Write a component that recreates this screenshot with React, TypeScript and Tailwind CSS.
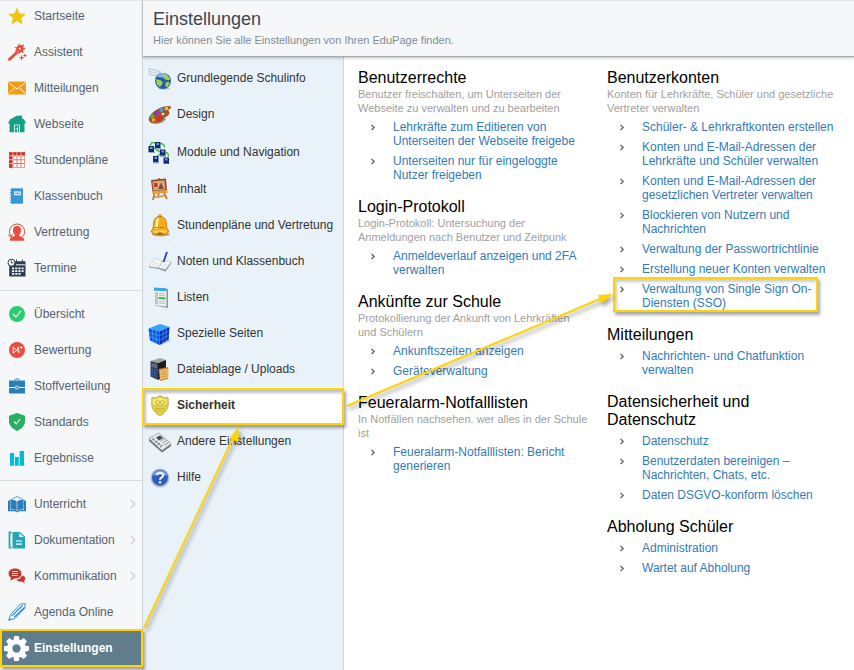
import type { ReactNode } from 'react'
import clsx from 'clsx'

type NavItem = { label: string; icon: ReactNode; more?: boolean }
type MenuItem = { label: string; icon: ReactNode; active?: boolean; tall?: boolean }
type LinkItem = { label: string; marked?: boolean }
type Section = { title: string; text?: string; links: LinkItem[] }

function Glyph({ children }: { children: ReactNode }) {
  return <svg className="size-5 shrink-0" viewBox="0 0 20 20" fill="none" aria-hidden="true">{children}</svg>
}

function Art({ children }: { children: ReactNode }) {
  return <svg className="size-6 shrink-0" viewBox="0 0 24 24" fill="none" aria-hidden="true">{children}</svg>
}

const navGroups: NavItem[][] = [
  [
    { label: 'Startseite', icon: <Glyph><path fill="#f1c40f" d="M10 1.4l2.6 6 6.4.5-4.9 4.2 1.6 6.3-5.7-3.3-5.7 3.3 1.6-6.3L1 7.9l6.4-.5z" /></Glyph> },
    {
      label: 'Assistent',
      icon: (
        <Glyph>
          <path stroke="#e74c3c" strokeWidth="2.8" strokeLinecap="round" d="M2.4 17.4l7.2-6.6" />
          <path fill="#e74c3c" d="M12.6 1l1.3 2.6L17 2.2l-.8 3.2 2.6 1.4-2.7 1.3.6 3-2.9-1.1-2 2.4-.9-2.9-3.2.2 1.9-2.6L7.4 5l3 .1L10.8 2l1.4 1.8z" />
          <circle cx="12.7" cy="6.8" r="1" fill="#f5f7f9" />
          <path stroke="#e74c3c" strokeWidth="1.1" d="M14.6 13.5v4.6M12.3 15.8h4.6M18 12v3M16.5 13.5h3" />
        </Glyph>
      ),
    },
    {
      label: 'Mitteilungen',
      icon: (
        <Glyph>
          <path fill="#f39c12" d="M1 3.5h18v13H1z" />
          <path stroke="#fff" strokeWidth="1" d="M1.5 4.5L10 11l8.5-6.5M1.5 15.5l6-5.5M18.5 15.5l-6-5.5" />
        </Glyph>
      ),
    },
    {
      label: 'Webseite',
      icon: (
        <Glyph>
          <path fill="#16a085" d="M2.5 18.2V9.5L1 9.2 3 5.5 10 1.6l1.5.9V1.6H15v2.6l2.2 1.3L19 9.2l-1.5.3v8.7z" />
          <path stroke="#d5eeea" strokeWidth="1" d="M7.5 18v-7h5v7M10.5 13v5" />
          <circle cx="9.2" cy="14.6" r=".6" fill="#fff" />
        </Glyph>
      ),
    },
    {
      label: 'Stundenpläne',
      icon: (
        <Glyph>
          <path fill="#e2776b" d="M2 2.3h16v15.4H2z" />
          <path fill="#c0392b" d="M2 2.3h16v3.4H2zM2 2.3h4v15.4H2z" />
          <path stroke="#fff" strokeWidth=".6" d="M5.9 2.3v15.4M9.9 2.3v3.4M13.9 2.3v3.4M2 5.8h16M2 9.7h4M2 13.600h4" />
          <path fill="#fff" d="M6.6 6.500h2.900v2.800H6.600zM10.500 6.500h2.900v2.800h-2.900zM14.400 6.500h2.900v2.800h-2.900zM6.600 10.300h2.900v2.800H6.600zM10.500 10.300h2.900v2.800h-2.900zM14.400 10.300h2.900v2.800h-2.900zM6.600 14.100h2.900v2.800H6.600zM10.500 14.100h2.900v2.800h-2.900zM14.400 14.100h2.900v2.800h-2.900z" />
        </Glyph>
      ),
    },
    {
      label: 'Klassenbuch',
      icon: (
        <Glyph>
          <path fill="#3498db" d="M4 2.3h12v15.4H4z" />
          <path stroke="#3498db" strokeWidth="1" strokeDasharray="1 1.5" d="M3.3 3.5v13.5" />
          <path fill="#d8ecf9" d="M7 5.3h7v4H7z" />
          <path stroke="#3498db" strokeWidth=".9" d="M8 7.3h5" />
        </Glyph>
      ),
    },
    {
      label: 'Vertretung',
      icon: (
        <Glyph>
          <path stroke="#e74c3c" strokeWidth="1" d="M4.5 14.8A7.6 7.6 0 1 1 15.5 14.8M1.2 13.3l3.3 1.8.9-3.2" />
          <path fill="#e74c3c" d="M10 4c2.6 0 4 1.6 4 4.200 0 2-.8 3.600-1.900 4.600v1.300c2.800.8 5.200 1.700 5.200 4.700H2.700c0-3 2.400-3.900 5.200-4.700v-1.300C6.800 11.800 6 10.200 6 8.200 6 5.600 7.400 4 10 4z" />
        </Glyph>
      ),
    },
    {
      label: 'Termine',
      icon: (
        <Glyph>
          <path fill="#2c3e50" d="M3 3.2h15.500v15.200H2.200V8z" />
          <path fill="#f5f7f9" d="M9 6.300h9v1H9z" />
          <circle cx="4.500" cy="4.700" r="3.500" fill="#f5f7f9" stroke="#2c3e50" strokeWidth="1" />
          <path stroke="#2c3e50" strokeWidth=".9" d="M4.500 2.500v2.400h1.800M9.500 1.500v3M15.500 1.500v3" />
          <path fill="#f5f7f9" d="M5 9.500h2.200v1.800H5zM8.200 9.500h2.200v1.800H8.200zM11.400 9.500h2.200v1.800h-2.200zM14.600 9.500h2v1.800h-2zM5 12.200h2.200V14H5zM8.200 12.200h2.200V14H8.200zM11.400 12.200h2.200V14h-2.200zM14.600 12.200h2V14h-2zM5 14.900h2.200v1.800H5zM8.200 14.900h2.200v1.800H8.200zM11.400 14.900h2.200v1.800h-2.200z" />
        </Glyph>
      ),
    },
  ],
  [
    { label: 'Übersicht', icon: <Glyph><circle cx="10" cy="10" r="8" fill="#2ecc71" /><path stroke="#eafaf0" strokeWidth="1.2" d="M6 10l3 3 5-6.3" /></Glyph> },
    {
      label: 'Bewertung',
      icon: <Glyph><circle cx="10" cy="10" r="8" fill="#e74c3c" /><path stroke="#fff" strokeWidth=".9" d="M6.2 13.500V7l5.300 5M6 12.800c3-1 4.200-2.700 5.200-6l1 6M12.800 7.500h3M14.300 6v3" /></Glyph>,
    },
    {
      label: 'Stoffverteilung',
      icon: (
        <Glyph>
          <path fill="#2980b9" d="M2 4.500h16v13H2z" />
          <path stroke="#2980b9" strokeWidth="1" d="M7.500 4.500l1-1.500h3l1 1.500" />
          <path stroke="#eaf3f9" strokeWidth="1" d="M2 11.500h6M12 11.500h6" />
          <ellipse cx="10" cy="11.500" rx="1.900" ry="1.400" stroke="#fff" strokeWidth=".8" />
        </Glyph>
      ),
    },
    {
      label: 'Standards',
      icon: <Glyph><path fill="#27ae60" d="M10 1l8 2.800v5c0 4.700-3 8-8 10.200C5 16.800 2 13.500 2 8.800v-5z" /><path stroke="#eafaf0" strokeWidth="1.100" d="M7 9.500l2.400 2.400L13.200 7" /></Glyph>,
    },
    { label: 'Ergebnisse', icon: <Glyph><path fill="#00bcd4" d="M3 5h4.200v12.800H3zM8 9h3.800v8.800H8zM12.600 3h4.400v14.800h-4.400z" /></Glyph> },
  ],
  [
    {
      label: 'Unterricht',
      more: true,
      icon: (
        <Glyph>
          <path stroke="#5b9bc8" strokeWidth="1" d="M1.500 7L10 2.500 18.500 7" />
          <path fill="#2980b9" d="M1 7h2v9.300H1zM17 7h2v9.300h-2zM3.400 6C6 5.700 8.400 6 9.700 7.200v9.200c-1.700-1-4-1.200-6.300-.8zM16.600 6c-2.600-.3-5 0-6.300 1.200v9.200c1.700-1 4-1.200 6.300-.8z" />
          <path stroke="#2980b9" strokeWidth="1.200" d="M1 16.600h7l2 1.200 2-1.200h7" />
        </Glyph>
      ),
    },
    {
      label: 'Dokumentation',
      more: true,
      icon: (
        <Glyph>
          <path fill="#26a5b5" d="M5.500 2H13l5 4.500v12H5.500z" />
          <path stroke="#26a5b5" strokeWidth="1.800" d="M4.500 2.500H2.500v15.200h2" />
          <path fill="#e4f5f7" d="M12.300 3v4h4.600z" />
          <path stroke="#fff" strokeWidth="1.200" d="M9 11h6M9 14.200h6" />
        </Glyph>
      ),
    },
    {
      label: 'Kommunikation',
      more: true,
      icon: (
        <Glyph>
          <path fill="#c0392b" d="M8 2.400c4 0 6.500 2.200 6.500 5.100S12 12.600 8 12.600l-1 .1-3.800 2 .8-3C2.300 10.800 1.600 9.300 1.600 7.500c0-2.900 2.400-5.100 6.400-5.100z" />
          <path stroke="#f5d8d5" strokeWidth="1" d="M5 5.500h6M5 7.500h6M5 9.500h6" />
          <path fill="#c0392b" stroke="#f5f7f9" strokeWidth=".6" d="M14.500 9.300c2.500.2 4.100 1.500 4.100 3.300 0 1-.5 1.800-1.300 2.400l1 2.800-3.300-1.800c-3.200.2-5.300-.7-6-2.500 3-.2 5-1.800 5.500-4.200z" />
        </Glyph>
      ),
    },
    {
      label: 'Agenda Online',
      icon: (
        <Glyph>
          <path fill="#fff" stroke="#3b8ed8" strokeWidth="1" d="M1.800 18.200l2-6L13.500 2l4.800-.2-.6 4.500L8 16.500z" />
          <path stroke="#3b8ed8" strokeWidth="1.400" d="M5 13.800L15.500 3.500M7.200 15.300L17.500 5.500" />
          <path fill="#3b8ed8" d="M1.400 18.600l1-3.200 2.200 2z" />
        </Glyph>
      ),
    },
  ],
]

const menu: MenuItem[] = [
  {
    label: 'Grundlegende Schulinfo',
    icon: (
      <Art>
        <path fill="#c9d4da" d="M0 1.500l13 3.500v7L1 9z" />
        <path stroke="#f4f8fa" strokeWidth="1" d="M1.500 4l9 2.500M2 6.500l7 2" />
        <ellipse cx="16" cy="22.500" rx="6" ry="1.200" fill="#b4c0c8" />
        <circle cx="15" cy="15" r="8" fill="#2a56b0" />
        <path fill="#82b6f0" d="M9 10.500c2-4 8-4.800 11-.8-3 2-8 2.600-11 .8z" />
        <path fill="#9bd64a" d="M15.500 8l4.500 2 2.500 3-2 1.500-3-1-2.500-2zM8 13l5 1.500 2 2.500-3 4-3.500-3zM18 16l4 .5-2.500 4.500-2.500-1z" />
      </Art>
    ),
  },
  {
    label: 'Design',
    icon: (
      <Art>
        <path fill="#8f9499" d="M2 20.500c6 3 14 1 16-4l-4-2z" />
        <path fill="#a65324" d="M9 7.500C14 4.500 20 3 23 4.600c1 2.300-2.600 2-2.600 4.400 2.700 1.700-.1 5.500-4 6.500-1.200 4.300-8.500 6.500-13.500 5C-2 18 2 11.500 9 7.500z" />
        <circle cx="8.500" cy="11" r="2.300" fill="#7b39d8" />
        <circle cx="13.500" cy="8" r="2" fill="#35a7e8" />
        <circle cx="18.500" cy="6.400" r="1.800" fill="#f1c832" />
        <circle cx="4.300" cy="14.500" r="2" fill="#45bf4e" />
        <circle cx="5.500" cy="18" r="1.800" fill="#f5a623" />
        <circle cx="11" cy="16.500" r="2.400" fill="#e62418" />
        <circle cx="15" cy="12" r="1.300" fill="#e9f2f8" />
      </Art>
    ),
  },
  {
    label: 'Module und Navigation',
    tall: true,
    icon: (
      <Art>
        <path stroke="#49c152" strokeWidth="1.600" d="M7.500 3L4 2.500 2 5.500M12 3.500c3 0 4.500 1.500 4.500 4M6 8l6 4M17.500 12.500c2.500 0 3 2 3 4M12 14l-3 3" />
        <path fill="#9aa6b5" d="M1 11.500h6V13H1zM7 8h6v1.500H7zM12 15.500h6V17h-6zM5 22h6v1.500H5zM15.500 23h6v1h-6z" />
        <path fill="#102a78" d="M7 2h5.500v6H7zM.5 6H6v6H.5zM12 9.500h5.500v6H12zM5 16h5.500v6H5zM15.500 17.500H21v6h-5.500z" />
        <path fill="#6e9be4" d="M8.500 3H11v2H8.500zM2 7h2.500v2H2zM13.500 10.500H16v2h-2.500zM6.500 17H9v2H6.500zM17 18.500h2.500v2H17z" />
      </Art>
    ),
  },
  {
    label: 'Inhalt',
    icon: (
      <Art>
        <path stroke="#c27c2e" strokeWidth="1.800" d="M7 14L5 23M15 14l4 8M10.500 16v5M11 1v2" />
        <path fill="#8d4b22" d="M3 3l15-1.500 1 12.500-14.500 1z" />
        <path fill="#dea77e" d="M4.500 4.500l12-1.200.8 9.200-11.800.9z" />
        <path fill="#c23a28" d="M6 6h3.500v4H6zM13 5l3 7h-3z" />
        <path fill="#4c5b66" d="M10 12l3-6 1 6z" />
        <path fill="#e1a041" d="M4 14l15.500-1v3l-15 1zM7 19l9-1v2l-9 1z" />
      </Art>
    ),
  },
  {
    label: 'Stundenpläne und Vertretung',
    icon: (
      <Art>
        <ellipse cx="13" cy="21.500" rx="9" ry="1.800" fill="#a3a8aa" />
        <circle cx="12" cy="3.300" r="2" fill="#e99b1c" />
        <path fill="#f5ac1b" stroke="#b96c0b" strokeWidth=".8" d="M12 3.500c-5 0-6.500 4-6.500 8 0 3-.8 4.500-2.300 6.400C3 20.500 7 22 12 22s9-1.500 8.600-4.100c-1.300-1.900-2.100-3.400-2.100-6.400 0-4-1.500-8-6.500-8z" />
        <path fill="#fff09a" d="M8 7.500c.5-2 1.500-2.600 3-2.600l-1.500 11H7z" />
        <path stroke="#a45d08" strokeWidth="1" strokeDasharray="1.500 1" d="M7 14.500h10" />
        <ellipse cx="12" cy="18.800" rx="7" ry="1.500" fill="#fbd552" />
        <ellipse cx="12" cy="20.500" rx="3" ry="1" fill="#9c4d07" />
      </Art>
    ),
  },
  {
    label: 'Noten und Klassenbuch',
    icon: (
      <Art>
        <path fill="#8d979f" d="M1 18.500l6-7.500 7 2.500 9.500.5-6 8.500-7-2.500z" />
        <path fill="#f6f8f9" stroke="#a9b2ba" strokeWidth=".5" d="M1 17.500l6-8 7.500 2.500-4 7zM10.500 19l4-7 9 .5-6 8z" />
        <path stroke="#d3dade" strokeWidth=".7" d="M5 13.500l6 2M4 15.500l6 2M14.500 15l5 1M13.500 17l4 1" />
        <path stroke="#2d3fc1" strokeWidth="1.800" d="M19 3l-3.500 10" />
      </Art>
    ),
  },
  {
    label: 'Listen',
    icon: (
      <Art>
        <path fill="#8b9499" d="M7 3l13 1v19L7 20.500z" />
        <path fill="#eef1f1" d="M6 2.500l12.500.7v18.300L6 20z" />
        <path fill="#38a9df" d="M6 2.500l12.500.7v3L6 5.700z" />
        <path fill="#bcc7ca" d="M7 7l3 .2v12L7 19z" />
        <path stroke="#a7afb3" strokeWidth=".8" d="M11 8.500l6 .3M11 10.500l6 .3M11 16l6 .5M11 18l6 .5" />
        <path fill="#35b54a" d="M10.500 12l7 .5v2l-7-.5z" />
      </Art>
    ),
  },
  {
    label: 'Spezielle Seiten',
    icon: (
      <Art>
        <path fill="#b5c9dc" d="M20 18l3 2-10 4-2-1z" />
        <path fill="#35a4fa" d="M.5 7.500L12 3l9.500 3-10 4.500z" />
        <path fill="#0c57e5" d="M.5 7.500l11 3V24L2 19.500z" />
        <path fill="#0a2cb0" d="M11.500 10.500l10-4.500-.8 12.500L11.500 24z" />
        <path stroke="#53b9ff" strokeWidth=".6" d="M1 11.500l10.500 3.300 9.700-5M1.500 15.500l10 3.700 9.300-5M4.500 8.800l.7 12M8 9.700l.3 12.700M15 9v12.700M18.200 7.500L18 19.500" />
      </Art>
    ),
  },
  {
    label: 'Dateiablage / Uploads',
    icon: (
      <Art>
        <path fill="#a2a5a6" d="M2.500 4L12 1l6 2-8.500 3z" />
        <path fill="#393f4b" d="M2.500 4l7.500 2v17l-7.500-3.500z" />
        <path fill="#1a1e24" d="M10 6l8-3v16l-8 4z" />
        <path stroke="#8b98bc" strokeWidth=".9" d="M3.500 7l5.500 1.500M3.500 9l5.500 1.500" />
        <path stroke="#366be0" strokeWidth="1.300" strokeDasharray="1.500 1" d="M3.500 12.500L9 14M3.500 15L9 16.500M3.500 17.500L9 19.500" />
        <path fill="#c57f2e" d="M10.500 12l9.500-2v12l-8 2z" />
        <path fill="#ebb867" d="M12 13l8.500-1.500V21L12 23z" />
        <path stroke="#c88b3d" strokeWidth=".7" d="M13.500 15l5.500-1M13.500 17.500l5.500-1M13.500 20l5.500-1" />
      </Art>
    ),
  },
  {
    label: 'Sicherheit',
    active: true,
    icon: (
      <Art>
        <path fill="#e5d33b" stroke="#b9b390" strokeWidth="1" d="M12 2.500C14.500 4.500 17.500 5 20 4.500c1 7.500.5 14-8 18.500-8.500-4.500-9-11-8-18.500C6.500 5 9.500 4.500 12 2.500z" />
        <path fill="#f7ee7b" d="M12 4.500c2 1.400 4 2 6.300 1.800.5 4-.3 6-1.300 7H5.500c-.5-2-.5-4.500-.2-7C8 6.500 10 6 12 4.500z" />
        <path stroke="#c4b534" strokeWidth="1" d="M5 12.800h14M7 15.500h10M8.500 18h7" />
        <ellipse cx="9.500" cy="9.500" rx="2.300" ry="1.700" stroke="#b5a72c" strokeWidth=".9" />
        <ellipse cx="14.500" cy="9.500" rx="2.300" ry="1.700" stroke="#b5a72c" strokeWidth=".9" />
      </Art>
    ),
  },
  {
    label: 'Andere Einstellungen',
    icon: (
      <Art>
        <path fill="#666c70" d="M1 10l13 11.500L23 15v2l-9 6.500L1 12z" />
        <path fill="#e9ebec" stroke="#8b9094" strokeWidth=".7" d="M1 9.500L10.500 4 23 14.500 14 21.500z" />
        <path fill="#454a4e" d="M8 8.500l4-2 3 2.500-4 2.500z" />
        <path stroke="#73797d" strokeWidth=".9" d="M4.500 9.500l9.500 8M6.500 14l3-2M9 16l3-2M12 18.500l3-2.500M12.500 12l4-2.500M14.500 14l4-2.500M16.500 16l4-2.500M3.500 11.500l3-2" />
      </Art>
    ),
  },
  {
    label: 'Hilfe',
    icon: (
      <Art>
        <circle cx="12" cy="13" r="9.500" fill="#b3bcc8" />
        <circle cx="12" cy="12.700" r="8" fill="#2b5ec6" />
        <path fill="#82a9e9" d="M5 11c.5-7.500 13.500-7.500 14 0-4-2-10-2-14 0z" />
        <path stroke="#fff" strokeWidth="2" d="M9 10.300c.2-3.200 6.200-3.200 6.200 0 0 2-3.200 2-3.200 4.500" />
        <circle cx="12" cy="17.300" r="1.200" fill="#fff" />
      </Art>
    ),
  },
]

const columns: Section[][] = [
  [
    {
      title: 'Benutzerrechte',
      text: 'Benutzer freischalten, um Unterseiten der Webseite zu verwalten und zu bearbeiten',
      links: [
        { label: 'Lehrkräfte zum Editieren von Unterseiten der Webseite freigebe' },
        { label: 'Unterseiten nur für eingeloggte Nutzer freigeben' },
      ],
    },
    {
      title: 'Login-Protokoll',
      text: 'Login-Protokoll: Untersuchung der Anmeldungen nach Benutzer und Zeitpunk',
      links: [{ label: 'Anmeldeverlauf anzeigen und 2FA verwalten' }],
    },
    {
      title: 'Ankünfte zur Schule',
      text: 'Protokollierung der Ankunft von Lehrkräften und Schülern',
      links: [{ label: 'Ankunftszeiten anzeigen' }, { label: 'Geräteverwaltung' }],
    },
    {
      title: 'Feueralarm-Notfalllisten',
      text: 'In Notfällen nachsehen. wer alles in der Schule ist',
      links: [{ label: 'Feueralarm-Notfalllisten: Bericht generieren' }],
    },
  ],
  [
    {
      title: 'Benutzerkonten',
      text: 'Konten für Lehrkräfte, Schüler und gesetzliche Vertreter verwalten',
      links: [
        { label: 'Schüler- & Lehrkraftkonten erstellen' },
        { label: 'Konten und E-Mail-Adressen der Lehrkräfte und Schüler verwalten' },
        { label: 'Konten und E-Mail-Adressen der gesetzlichen Vertreter verwalten' },
        { label: 'Blockieren von Nutzern und Nachrichten' },
        { label: 'Verwaltung der Passwortrichtlinie' },
        { label: 'Erstellung neuer Konten verwalten' },
        { label: 'Verwaltung von Single Sign On-Diensten (SSO)', marked: true },
      ],
    },
    { title: 'Mitteilungen', links: [{ label: 'Nachrichten- und Chatfunktion verwalten' }] },
    {
      title: 'Datensicherheit und Datenschutz',
      links: [
        { label: 'Datenschutz' },
        { label: 'Benutzerdaten bereinigen – Nachrichten, Chats, etc.' },
        { label: 'Daten DSGVO-konform löschen' },
      ],
    },
    { title: 'Abholung Schüler', links: [{ label: 'Administration' }, { label: 'Wartet auf Abholung' }] },
  ],
]

function Gear() {
  return (
    <svg className="size-[25px] shrink-0" viewBox="-12 -12 24 24" fill="none" aria-hidden="true">
      <circle r="6.500" stroke="#fff" strokeWidth="5" />
      {[0, 45, 90, 135].map((deg) => (
        <path key={deg} fill="#fff" transform={`rotate(${deg})`} d="M-3-8l.8-4h4.400l.8 4zM-3 8l.8 4h4.400l.8-4z" />
      ))}
    </svg>
  )
}

function Sidebar() {
  return (
    <nav className="w-[143px] shrink-0 border-r border-[#cfd3d7] bg-[#f5f7f9] text-xs text-[#566270] shadow-[inset_0_1px_0_#e3e5e7]">
      {navGroups.map((group, i) => (
        <ul key={i} className={clsx('space-y-1', i > 0 && 'mt-1.5 border-t border-[#d9dcdf] pt-[7px]')}>
          {group.map((item) => (
            <li key={item.label}>
              <a href="#" className="flex h-8 items-center gap-[7px] pr-1.5 pl-[7px]">
                {item.icon}
                <span className="grow">{item.label}</span>
                {item.more && (
                  <svg className="h-2.5 w-1.5 shrink-0" viewBox="0 0 6 10" fill="none" aria-hidden="true">
                    <path stroke="#cdd1d5" strokeWidth="1.2" d="M.8 1l4 4-4 4" />
                  </svg>
                )}
              </a>
            </li>
          ))}
        </ul>
      ))}
      <a
        href="#"
        aria-current="page"
        className="relative mt-px -mr-px flex h-[38px] items-center gap-[5px] border-2 border-[#ffd400] bg-[#607d8b] pl-0.5 font-bold text-white shadow-[2px_3px_3px_rgba(0,0,0,0.35)]"
      >
        <Gear />
        Einstellungen
      </a>
    </nav>
  )
}

function SettingsMenu() {
  return (
    <ul className="w-[201px] shrink-0 border-r border-[#c8d8e4] bg-[#e9f2f8] pt-[3px] text-xs text-[#333]">
      {menu.map((item) => (
        <li key={item.label} className={clsx('relative', item.active && 'bg-white font-bold')}>
          <a href="#" className={clsx('flex items-center gap-[5px] pl-[5px]', item.tall ? 'h-[39px]' : 'h-9')}>
            {item.icon}
            {item.label}
          </a>
          {item.active && (
            <span className="pointer-events-none absolute -inset-x-px top-px -bottom-0.5 z-10 border-2 border-[#ffd400] shadow-[2px_3px_3px_rgba(0,0,0,0.35),inset_2px_3px_3px_rgba(0,0,0,0.25)]" />
          )}
        </li>
      ))}
    </ul>
  )
}

function SectionBlock({ title, text, links }: Section) {
  return (
    <section className="mb-[13px]">
      <h2 className="text-base leading-[18px] text-black">{title}</h2>
      {text && <p className="text-[11px] leading-[14px] text-[#a0a0a0]">{text}</p>}
      <ul className="pt-0.5">
        {links.map((link) => (
          <li key={link.label} className="relative flex py-[3px] pl-3">
            <svg className="mt-1 mr-[17px] h-[7px] w-1.5 shrink-0" viewBox="0 0 6 7" fill="none" aria-hidden="true">
              <path stroke="#555" strokeWidth="1.2" d="M1.500 .8l2.700 2.700-2.700 2.700" />
            </svg>
            <a href="#" className="text-xs leading-[14px] text-[#337ab7]">{link.label}</a>
            {link.marked && (
              <span className="pointer-events-none absolute -top-0.5 right-5 bottom-px left-1.5 border-2 border-[#ffd400] shadow-[2px_3px_3px_rgba(0,0,0,0.35),inset_2px_3px_3px_rgba(0,0,0,0.2)]" />
            )}
          </li>
        ))}
      </ul>
    </section>
  )
}

// Click path: Einstellungen -> Sicherheit -> SSO
function Arrows() {
  return (
    <svg
      className="pointer-events-none absolute top-0 left-0 z-20 h-[670px] w-[854px] drop-shadow-[2px_3px_2px_rgba(0,0,0,0.4)]"
      viewBox="0 0 854 670"
      fill="none"
      aria-hidden="true"
    >
      <path stroke="#ffd400" strokeWidth="2" d="M144 628L234 436M347 406L600 299" />
      <path fill="#ffd400" d="M238.500 427l-9 11.500 9 3.500zM613 294l-15 1 3.500 8.500z" />
    </svg>
  )
}

export default function App() {
  return (
    <div className="relative flex min-h-screen overflow-hidden bg-white font-['Liberation_Sans',Arial,sans-serif]">
      <Sidebar />
      <div className="flex min-w-0 grow flex-col">
        <header className="relative border-t border-b border-t-[#e3e5e7] border-b-[#a5abb0] bg-[#f5f7f9] px-2.5 pt-1.5 pb-2 shadow-[0_1px_3px_rgba(0,0,0,0.25)]">
          <h1 className="text-lg leading-6 text-[#3b4654]">Einstellungen</h1>
          <p className="mt-0.5 text-[11px] leading-[15px] text-[#7f8d99]">Hier können Sie alle Einstellungen von Ihren EduPage finden.</p>
        </header>
        <div className="flex grow">
          <SettingsMenu />
          <main className="grid min-w-0 grow grid-cols-2 content-start gap-x-[18px] pt-3 pr-4 pl-3.5">
            {columns.map((sections, i) => (
              <div key={i}>
                {sections.map((s) => <SectionBlock key={s.title} {...s} />)}
              </div>
            ))}
          </main>
        </div>
      </div>
      <Arrows />
    </div>
  )
}
